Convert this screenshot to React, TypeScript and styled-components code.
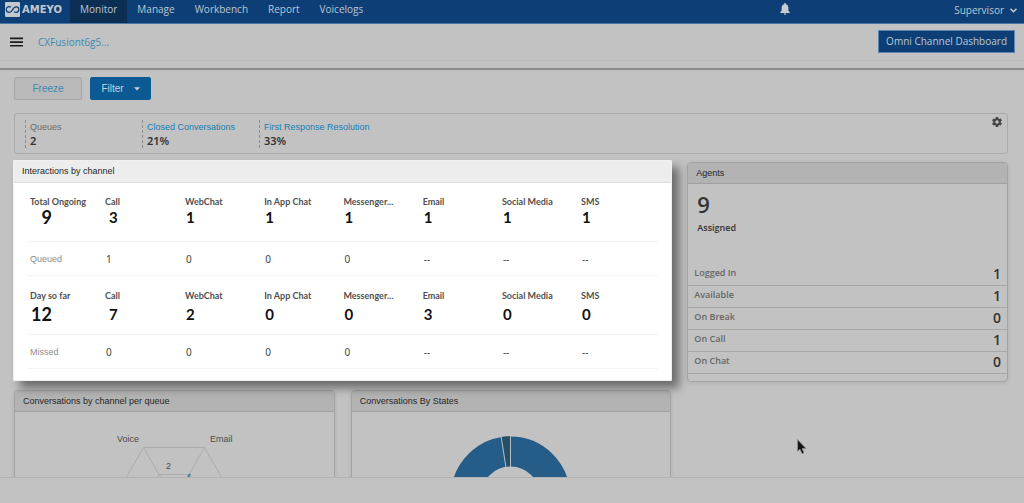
import React from "react";
import styled, { createGlobalStyle } from "styled-components";

const sans = `"Liberation Sans", Arial, sans-serif`;
const noto = `"Noto Sans", "Open Sans", sans-serif`;
const openSans = `"Open Sans", "Noto Sans", sans-serif`;
const lato = `Lato, "Open Sans", sans-serif`;

const GlobalStyle = createGlobalStyle`
  * { box-sizing: border-box; }
  body { margin: 0; background: #c2c2c2; color: #333; font-family: ${sans}; font-size: 9px; line-height: 14px; }
  button { font: inherit; cursor: pointer; }
  a { text-decoration: none; }
  h1, h2, p, ul, dl, dd { margin: 0; padding: 0; }
`;

const Page = styled.div`
  display: flex;
  flex-direction: column;
  height: 100vh;
  overflow: hidden;
`;

const TopBar = styled.header`
  flex: none;
  display: flex;
  align-items: stretch;
  height: 24px;
  background: #0d3f76;
  border-bottom: 1px solid #4b78a8;
  font-family: ${openSans};
  font-size: 10px;
  color: #bcc7d2;
`;

const Logo = styled.a`
  display: flex;
  align-items: center;
  width: 70px;
  padding: 0 0 4px 5px;
`;

const Nav = styled.nav`
  display: flex;
  flex: 1;
`;

const NavLink = styled.a<{ $active?: boolean }>`
  padding: 2px 10px 0;
  color: #bcc7d2;
  background: ${(p) => (p.$active ? "#0b2e52" : "transparent")};
`;

const IconButton = styled.button`
  display: flex;
  align-items: center;
  padding: 0;
  border: 0;
  background: none;
  color: inherit;
`;

const BellButton = styled(IconButton)`
  margin-right: 164px;
  padding-bottom: 5px;
`;

const UserButton = styled(IconButton)`
  gap: 6px;
  padding: 0 7px 3px 0;
`;

const SubBar = styled.div`
  flex: none;
  display: flex;
  align-items: center;
  height: 37px;
  padding: 0 9px 0 10px;
  border-bottom: 1px solid #bababa;
  font-family: ${openSans};
  font-size: 10px;
`;

const ProcessLink = styled.a`
  flex: 1;
  margin-left: 15px;
  color: #3c8ab4;
`;

const DashboardButton = styled.button`
  height: 23px;
  margin-bottom: 2px;
  padding: 0 7px;
  border: 1px solid #5f86b0;
  background: #0d3f76;
  color: #bcc7d2;
`;

const Divider = styled.div`
  flex: none;
  height: 9px;
  border-bottom: 2px solid #8a8a8a;
`;

const Content = styled.main`
  flex: 1;
  min-height: 0;
  overflow: hidden;
  padding: 7px 16px 0 14px;
`;

const Toolbar = styled.div`
  display: flex;
  gap: 8px;
  margin-bottom: 13px;
`;

const ToolButton = styled.button<{ $primary?: boolean }>`
  display: flex;
  align-items: center;
  justify-content: center;
  gap: 10px;
  height: 23px;
  min-width: ${(p) => (p.$primary ? 61 : 68)}px;
  padding: 0 10px;
  border: 1px solid ${(p) => (p.$primary ? "#0c5a94" : "#a6a6a6")};
  border-radius: 2px;
  background: ${(p) => (p.$primary ? "#0c5a94" : "#b9b9b9")};
  color: ${(p) => (p.$primary ? "#c8d4de" : "#3c8ab4")};
  font-size: 10px;
`;

const Summary = styled.section`
  display: flex;
  align-items: flex-start;
  height: 41px;
  padding: 6px 5px 0 10px;
  border: 1px solid #ababab;
  border-radius: 3px;
`;

const Metric = styled.dl`
  width: 117px;
  height: 28px;
  padding-left: 4px;
  border-left: 1px dashed #8c8c8c;
`;

const MetricLabel = styled.dt<{ $link?: boolean }>`
  white-space: nowrap;
  line-height: 14px;
  color: ${(p) => (p.$link ? "#1380b6" : "#6c6c6c")};
`;

const MetricValue = styled.dd`
  font-family: ${noto};
  font-size: 11px;
  font-weight: 600;
  line-height: 14px;
`;

const SettingsButton = styled(IconButton)`
  margin: -3px 0 0 auto;
  color: #444;
`;

const Dashboard = styled.div`
  display: grid;
  grid-template-columns: repeat(3, minmax(0, 1fr));
  gap: 8px 16px;
  margin-top: 8px;
`;

const Card = styled.section`
  overflow: hidden;
  border: 1px solid #a3a3a3;
  border-radius: 4px;
  box-shadow: 0 1px 4px rgba(0, 0, 0, 0.1);
`;

const CardTitle = styled.h2`
  height: 21px;
  padding: 0 8px;
  border-bottom: 1px solid #a0a0a0;
  background: #b3b3b3;
  font-size: 9px;
  font-weight: 400;
  line-height: 20px;
  color: #262626;
`;

const SpotlightCard = styled(Card)`
  grid-column: span 2;
  position: relative;
  z-index: 1;
  margin: -2px -1px 1px;
  padding-bottom: 11px;
  border-color: #f0f0f0;
  border-radius: 1px;
  background: #fff;
  box-shadow: 7px 7px 10px rgba(0, 0, 0, 0.45);

  ${CardTitle} {
    height: 22px;
    border-color: #dcdcdc;
    background: #ededed;
  }
`;

const ChannelTable = styled.table`
  width: calc(100% - 27px);
  margin-left: 14px;
  border-collapse: separate;
  border-spacing: 0;
  table-layout: fixed;
  font-family: ${lato};
  text-align: left;

  th { padding: 0 0 0 2px; }
  td { padding: 0 0 0 3px; }
  col:first-child { width: 75px; }
  col:nth-child(2) { width: 80px; }
`;

const ChannelHead = styled.th<{ $later?: boolean }>`
  && { padding-top: ${(p) => (p.$later ? 12 : 11)}px; }
  font-weight: 700;
  line-height: 15px;
  white-space: nowrap;
  color: #505050;
`;

const CountRow = styled.tr<{ $later?: boolean }>`
  td {
    height: ${(p) => (p.$later ? 32 : 33)}px;
    padding-top: ${(p) => (p.$later ? 3 : 0)}px;
    border-bottom: 1px solid #f0f0f0;
    vertical-align: top;
    font-size: 15px;
    font-weight: 700;
    line-height: 16px;
    color: #111;
  }
  td:first-child { font-size: 18px; }
  td:nth-child(2) { padding-left: 6px; }
`;

const Total = styled.span`
  display: inline-block;
  min-width: 21px;
  text-align: right;
`;

const DetailRow = styled.tr`
  th, td {
    height: 34px;
    border-bottom: 1px solid #f4f4f4;
    vertical-align: middle;
    font-weight: 400;
  }
  th { font-family: ${sans}; color: #8c8c8c; }
  td { font-family: ${noto}; font-size: 10px; color: #444; }
`;

const AgentTotal = styled.div`
  height: 80px;
  padding: 4px 9px 0;
  font-family: ${openSans};
  font-weight: 600;
`;

const AgentCount = styled.p`
  font-size: 22px;
  line-height: 32px;
`;

const AgentCaption = styled.p`
  line-height: 16px;
`;

const AgentList = styled.dl`
  padding-bottom: 7px;
  font-family: ${openSans};
`;

const AgentRow = styled.div`
  display: flex;
  justify-content: space-between;
  height: 22px;
  padding: 0 6px;
  border-bottom: 1px solid #a6a6a6;
  font-weight: 600;
  color: #666;

  dt { line-height: 18px; }
  dd { font-size: 14px; line-height: 20px; color: #333; }
`;

const Chart = styled.svg`
  display: block;
  margin: 0 auto;
  font-family: ${sans};
`;

const Footer = styled.footer`
  flex: none;
  height: 26px;
  border-top: 1px solid #b3b3b3;
`;

const Pointer = styled.svg`
  position: absolute;
  left: 797px;
  top: 439px;
  z-index: 2;
  pointer-events: none;
`;

const channels = ["Call", "WebChat", "In App Chat", "Messenger...", "Email", "Social Media", "SMS"];

type GroupProps = {
  title: string;
  total: number;
  counts: number[];
  detail: string;
  details: string[];
  later?: boolean;
};

function ChannelGroup({ title, total, counts, detail, details, later }: GroupProps) {
  return (
    <ChannelTable>
      <colgroup>
        <col />
        {channels.map((c) => <col key={c} />)}
      </colgroup>
      <thead>
        <tr>
          <ChannelHead $later={later} scope="col">{title}</ChannelHead>
          {channels.map((c) => <ChannelHead key={c} $later={later} scope="col">{c}</ChannelHead>)}
        </tr>
      </thead>
      <tbody>
        <CountRow $later={later}>
          <td><Total>{total}</Total></td>
          {counts.map((n, i) => <td key={channels[i]}>{n}</td>)}
        </CountRow>
        <DetailRow>
          <th scope="row">{detail}</th>
          {details.map((n, i) => <td key={channels[i]}>{n}</td>)}
        </DetailRow>
      </tbody>
    </ChannelTable>
  );
}

const agentStates: [string, number][] = [
  ["Logged In", 1],
  ["Available", 1],
  ["On Break", 0],
  ["On Call", 1],
  ["On Chat", 0],
];

export default function App() {
  return (
    <>
      <GlobalStyle />
      <Page>
        <TopBar>
          <Logo href="#" aria-label="Ameyo">
            <svg width="60" height="16" viewBox="0 0 60 16">
              <rect x="0" y="0" width="15" height="15" rx="1" fill="#c2c8ce" />
              <path d="M6 5.3C4.5 4 1.2 4.5 1.2 7.5S4.7 11 6.3 9.4L9 5.9C10.7 4 13.8 4.6 13.8 7.5S10.8 11 9 9.8" fill="none" stroke="#0d3f76" strokeWidth="1.3" />
              <text x="17" y="11" fontFamily="DejaVu Sans, sans-serif" fontWeight="700" fontSize="10" fill="#c2c8ce">AMEYO</text>
            </svg>
          </Logo>
          <Nav>
            <NavLink href="#" $active>Monitor</NavLink>
            <NavLink href="#">Manage</NavLink>
            <NavLink href="#">Workbench</NavLink>
            <NavLink href="#">Report</NavLink>
            <NavLink href="#">Voicelogs</NavLink>
          </Nav>
          <BellButton aria-label="Notifications">
            <svg width="10" height="12" viewBox="0 0 10 12" fill="#c9cdd1">
              <path d="M5 0a.9.9 0 0 0-.9 1v.3C2.400 1.700 1.600 3.100 1.600 5v2.700L.2 9.200v.8h9.600v-.8L8.400 7.700V5c0-1.900-.8-3.300-2.500-3.700V1A.9.9 0 0 0 5 0zM3.800 10.600a1.200 1.200 0 0 0 2.400 0z" />
            </svg>
          </BellButton>
          <UserButton>
            Supervisor
            <svg width="7" height="5" viewBox="0 0 7 5" fill="none" stroke="#c9cdd1" strokeWidth="1.500">
              <path d="M.5.700 3.500 3.700 6.500.700" />
            </svg>
          </UserButton>
        </TopBar>

        <SubBar>
          <IconButton aria-label="Menu">
            <svg width="13" height="10" viewBox="0 0 13 10" fill="#1c1c1c">
              <path d="M0 .5h13v1.700H0zM0 4.200h13v1.700H0zM0 7.900h13v1.700H0z" />
            </svg>
          </IconButton>
          <ProcessLink href="#">CXFusiont6g5...</ProcessLink>
          <DashboardButton>Omni Channel Dashboard</DashboardButton>
        </SubBar>
        <Divider />

        <Content>
          <Toolbar>
            <ToolButton>Freeze</ToolButton>
            <ToolButton $primary>
              Filter
              <svg width="6" height="4" viewBox="0 0 6 4" fill="#c8d2da"><path d="M0 .3h6L3 3.600z" /></svg>
            </ToolButton>
          </Toolbar>

          <Summary>
            <Metric>
              <MetricLabel>Queues</MetricLabel>
              <MetricValue>2</MetricValue>
            </Metric>
            <Metric>
              <MetricLabel $link>Closed Conversations</MetricLabel>
              <MetricValue>21%</MetricValue>
            </Metric>
            <Metric>
              <MetricLabel $link>First Response Resolution</MetricLabel>
              <MetricValue>33%</MetricValue>
            </Metric>
            <SettingsButton aria-label="Settings">
              <svg width="10" height="10" viewBox="2 2 20 20" fill="currentColor">
                <path d="M19.430 12.980c.04-.32.07-.64.07-.98s-.03-.66-.07-.98l2.110-1.650c.19-.15.24-.42.12-.64l-2-3.460c-.12-.22-.39-.3-.61-.22l-2.490 1c-.52-.4-1.080-.73-1.690-.98l-.38-2.650A.49.49 0 0 0 14 2h-4c-.25 0-.46.18-.49.42l-.38 2.650c-.61.25-1.170.59-1.690.98l-2.490-1c-.23-.09-.49 0-.61.22l-2 3.460c-.13.22-.07.49.12.64l2.110 1.650c-.04.32-.07.65-.07.98s.03.66.07.98l-2.110 1.650c-.19.15-.24.42-.12.64l2 3.460c.12.22.39.3.61.22l2.490-1c.52.4 1.080.73 1.690.98l.38 2.650c.03.24.24.42.49.42h4c.25 0 .46-.18.49-.42l.38-2.650c.61-.25 1.170-.59 1.690-.98l2.490 1c.23.09.49 0 .61-.22l2-3.460c.12-.22.07-.49-.12-.64zM12 15.500A3.500 3.500 0 1 1 12 8.500a3.500 3.500 0 0 1 0 7z" />
              </svg>
            </SettingsButton>
          </Summary>

          <Dashboard>
            <SpotlightCard>
              <CardTitle>Interactions by channel</CardTitle>
              <ChannelGroup
                title="Total Ongoing"
                total={9}
                counts={[3, 1, 1, 1, 1, 1, 1]}
                detail="Queued"
                details={["1", "0", "0", "0", "--", "--", "--"]}
              />
              <ChannelGroup
                later
                title="Day so far"
                total={12}
                counts={[7, 2, 0, 0, 3, 0, 0]}
                detail="Missed"
                details={["0", "0", "0", "0", "--", "--", "--"]}
              />
            </SpotlightCard>

            <Card>
              <CardTitle>Agents</CardTitle>
              <AgentTotal>
                <AgentCount>9</AgentCount>
                <AgentCaption>Assigned</AgentCaption>
              </AgentTotal>
              <AgentList>
                {agentStates.map(([name, n]) => (
                  <AgentRow key={name}><dt>{name}</dt><dd>{n}</dd></AgentRow>
                ))}
              </AgentList>
            </Card>

            <Card>
              <CardTitle>Conversations by channel per queue</CardTitle>
              <Chart width="160" height="170" viewBox="94 412 160 170">
                <g fill="none" stroke="#adadad">
                  <path d="M143.500 447.500H204.500L235 500.500L204.500 553.500H143.500L113 500.500Z" />
                  <path d="M158.500 474.500H189.500L204.500 500.500L189.500 526.500H158.500L143.500 500.500Z" />
                  <path d="M143.500 447.500L204.500 553.500M204.500 447.500L143.500 553.500M113 500.500H235" />
                </g>
                <path d="M190 474L174 500.500" stroke="#3282b4" strokeWidth="2" />
                <g fill="#4c4c4c" fontSize="9">
                  <text x="117" y="442">Voice</text>
                  <text x="210" y="442">Email</text>
                  <text x="166" y="469">2</text>
                </g>
              </Chart>
            </Card>

            <Card>
              <CardTitle>Conversations By States</CardTitle>
              <Chart width="140" height="170" viewBox="441 412 140 170">
                <circle cx="510.500" cy="496" r="44.500" fill="none" stroke="#265c88" strokeWidth="30" />
                <path d="M501.200 437L505.800 466.200L510.500 466V436.200Q505 436.200 501.200 437Z" fill="#274f66" />
                <path d="M501.200 436.500L505.900 467M510.500 436V467" stroke="#b4bec6" />
              </Chart>
            </Card>
          </Dashboard>
        </Content>
        <Footer />
      </Page>
      <Pointer width="10" height="16" viewBox="0 0 10 16">
        <path d="M.5.500V12.500L3 10.200L5 14.700L7 13.800L5.200 9.500H9Z" fill="#161616" stroke="#8e8e8e" strokeWidth=".8" />
      </Pointer>
    </>
  );
}
